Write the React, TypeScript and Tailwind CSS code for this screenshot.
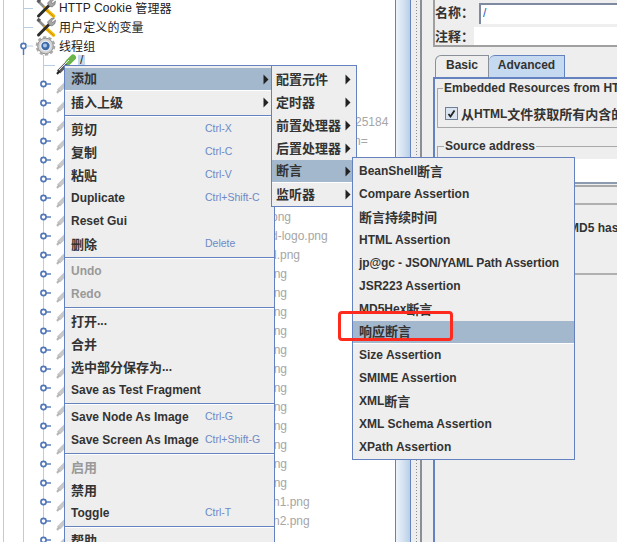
import React from "react";

const FONT = "[font-family:'Liberation_Sans','Noto_Sans_CJK_SC',sans-serif]";

function T({ s, size = "text-[13px]" }: { s: string; size?: string }) {
  const parts = s.split(/([\u3000-\u9fff\uff00-\uffef]+)/);
  return (
    <>
      {parts.map((p, i) =>
        /[\u3000-\u9fff\uff00-\uffef]/.test(p) ? (
          <span key={i} className={`relative top-[1px] ${size}`}>{p}</span>
        ) : (
          <span key={i}>{p}</span>
        )
      )}
    </>
  );
}

function Wrench() {
  return (
    <g>
      <path d="M38 3 L46 11" stroke="#8f8f8f" strokeWidth="2.6" />
      <path d="M37.5 2 L40 4" stroke="#5a5a5a" strokeWidth="3.4" />
      <path d="M45 10.5 L53.5 18" stroke="#f2b705" strokeWidth="3.6" strokeLinecap="round" />
      <path d="M45.5 11 L53.5 18.5" stroke="#b57f00" strokeWidth="0.7" />
      <path d="M38.5 18 L50 6.5" stroke="#2b2b2b" strokeWidth="3" strokeLinecap="round" />
      <path d="M49 8 L47.5 5 L51 1.5 L54.5 1 L51.5 4 L52.5 5.5 L55.5 3 L55 6.5 L52 9 Z" fill="#a5a5a5" stroke="#555" strokeWidth="0.5" />
    </g>
  );
}

function Gear() {
  return (
    <g>
      <circle cx="45.5" cy="10" r="7.8" fill="#d2d2d2" stroke="#8d8d8d" />
      <circle cx="45.5" cy="10" r="8.6" fill="none" stroke="#a8a8a8" strokeWidth="2.4" strokeDasharray="3.2 2.2" />
      <circle cx="45.5" cy="10" r="4.8" fill="#3c69a8" stroke="#eef2f7" strokeWidth="1.2" />
      <circle cx="45" cy="9.4" r="2" fill="#a9c6ea" />
    </g>
  );
}

function Pencil({ active }: { active?: boolean }) {
  return (
    <g>
      <path d="M58.5 17 L69 6.5" stroke={active ? "#5c5c5c" : "#c8c8c8"} strokeWidth="4.4" />
      <path d="M57 19 L59.5 16" stroke={active ? "#222" : "#b5b5b5"} strokeWidth="2" />
      {active && <path d="M68.5 7 L73 2.5" stroke="#6cb44c" strokeWidth="6" strokeLinecap="round" />}
      {active && <path d="M59 15 L69 5" stroke="#e8e8e8" strokeWidth="1" />}
    </g>
  );
}

const GUIDE = "#b7cde4";
const KNOB = "#4f76b8";

function TreeRow({ i, label, faded, x }: { i: number; label?: string; faded?: string; x?: number }) {
  const top = i < 3;
  return (
    <div className="flex h-[19px] shrink-0 items-center whitespace-nowrap text-[12px] text-[#222]">
      <svg width={top ? 59 : 78} height="19" className="shrink-0 overflow-visible">
        <path d="M3.5 0V19" stroke={GUIDE} />
        {i !== 2 && <path d="M23.5 0V19" stroke={GUIDE} />}
        {i >= 3 && <path d="M43.5 0V19" stroke={GUIDE} />}
        {i < 2 && <path d="M23.5 10.5H33" stroke={GUIDE} />}
        {i < 2 && <Wrench />}
        {i === 2 && (
          <>
            <path d="M23.5 0V7" stroke={GUIDE} />
            <path d="M23.5 12V19" stroke={KNOB} strokeWidth="1.4" />
            <circle cx="23.5" cy="10" r="2.6" fill="#fff" stroke={KNOB} strokeWidth="1.6" />
            <path d="M26 10H33" stroke={GUIDE} />
            <Gear />
          </>
        )}
        {i === 3 && <path d="M43.5 10.5H55" stroke={GUIDE} />}
        {i > 3 && (
          <>
            <circle cx="43.5" cy="10" r="2.6" fill="#fff" stroke={KNOB} strokeWidth="1.6" />
            <path d="M46 10H51" stroke={KNOB} strokeWidth="1.4" />
          </>
        )}
        {i >= 3 && <Pencil active={i === 3} />}
      </svg>
      {label && (
        <span className={i === 3 ? "h-[11px] -translate-y-1 bg-[#c5daf0] px-[2px] leading-[11px]" : "tracking-[0.1px]"}>
          <T s={label} size="text-[12px]" />
        </span>
      )}
      {faded && (
        <span className="text-[#a6a6a6]" style={{ paddingLeft: (x ?? 78) - 78 }}>
          {faded}
        </span>
      )}
    </div>
  );
}

const fadedRows: Record<number, [string, number]> = {
  6: ["25184", 355],
  7: ["n=", 354],
  11: ["png", 271],
  12: ["d-logo.png", 271],
  13: ["d.png", 270],
  26: ["n1.png", 273],
  27: ["n2.png", 273],
};
for (let i = 14; i <= 25; i++) fadedRows[i] = ["png", 267];

function Arrow() {
  return (
    <svg width="6" height="11" viewBox="0 0 6 11" className="mt-[2px] shrink-0">
      <path d="M0.5 0.5L5.5 5.5L0.5 10.5Z" fill="#222" />
    </svg>
  );
}

type Item = { t?: string; k?: string; sub?: boolean; on?: boolean; off?: boolean; sep?: boolean; tight?: boolean };

function MenuRow({ it, pad }: { it: Item; pad: string }) {
  if (it.sep) {
    return (
      <div className="h-[4px] shrink-0 pt-[1px]">
        <div className="h-[1px] bg-[#6382bf]" />
        <div className="h-[1px] bg-white" />
      </div>
    );
  }
  return (
    <div
      className={`flex h-[23px] shrink-0 items-center whitespace-nowrap pb-[2px] pr-[5px] text-[12px] font-bold ${pad} ${
        it.on ? "border-b border-white bg-[#a3b8cc]" : ""
      } ${it.off ? "text-[#999999]" : "text-[#333333]"} ${it.tight ? "tracking-[-0.1px]" : ""}`}
    >
      <span className="flex-1">
        <T s={it.t ?? ""} />
      </span>
      {it.k && <span className="absolute left-[140px] text-[10.5px] font-normal text-[#6d8ac6]">{it.k}</span>}
      {it.sub && <Arrow />}
    </div>
  );
}

const mainItems: Item[] = [
  { t: "添加", sub: true, on: true },
  { t: "插入上级", sub: true },
  { sep: true },
  { t: "剪切", k: "Ctrl-X" },
  { t: "复制", k: "Ctrl-C" },
  { t: "粘贴", k: "Ctrl-V" },
  { t: "Duplicate", k: "Ctrl+Shift-C" },
  { t: "Reset Gui" },
  { t: "删除", k: "Delete" },
  { sep: true },
  { t: "Undo", off: true },
  { t: "Redo", off: true },
  { sep: true },
  { t: "打开..." },
  { t: "合并" },
  { t: "选中部分保存为..." },
  { t: "Save as Test Fragment" },
  { sep: true },
  { t: "Save Node As Image", k: "Ctrl-G" },
  { t: "Save Screen As Image", k: "Ctrl+Shift-G" },
  { sep: true },
  { t: "启用", off: true },
  { t: "禁用" },
  { t: "Toggle", k: "Ctrl-T" },
  { sep: true },
  { t: "帮助" },
];

const subItems: Item[] = [
  { t: "配置元件", sub: true },
  { t: "定时器", sub: true },
  { t: "前置处理器", sub: true },
  { t: "后置处理器", sub: true },
  { t: "断言", sub: true, on: true },
  { t: "监听器", sub: true },
];

const assertItems: Item[] = [
  { t: "BeanShell断言" },
  { t: "Compare Assertion" },
  { t: "断言持续时间" },
  { t: "HTML Assertion" },
  { t: "jp@gc - JSON/YAML Path Assertion", tight: true },
  { t: "JSR223 Assertion" },
  { t: "MD5Hex断言" },
  { t: "响应断言", on: true },
  { t: "Size Assertion" },
  { t: "SMIME Assertion" },
  { t: "XML断言" },
  { t: "XML Schema Assertion" },
  { t: "XPath Assertion" },
];

export default function App() {
  return (
    <div className={`relative flex h-[542px] w-[617px] overflow-hidden bg-white ${FONT}`}>
      {/* tree */}
      <div className="-mt-[2px] flex w-[395px] shrink-0 flex-col overflow-hidden">
        <TreeRow i={0} label="HTTP Cookie 管理器" />
        <TreeRow i={1} label="用户定义的变量" />
        <TreeRow i={2} label="线程组" />
        <TreeRow i={3} label="/" />
        {Array.from({ length: 25 }, (_, k) => k + 4).map((i) => (
          <TreeRow key={i} i={i} faded={fadedRows[i]?.[0]} x={fadedRows[i]?.[1]} />
        ))}
      </div>

      {/* scrollbar */}
      <div className="w-[16px] shrink-0 border-x border-[#6382bf] bg-gradient-to-r from-[#eef3fa] via-[#d5e3f2] to-[#b9cfe6]" />

      {/* divider */}
      <div className="flex w-[11px] shrink-0 justify-center border-r-2 border-[#8a8f96] bg-[#eeeeee] pl-[2px]">
        <div className="h-full w-[3px] bg-[radial-gradient(circle,#8d8d8d_0.7px,transparent_0.8px)] bg-[length:3px_3px]" />
      </div>

      {/* right */}
      <div className="flex min-w-0 flex-1 flex-col bg-[#eeeeee] pl-[11px]">
        <div className="h-[47px] w-[300px] shrink-0 border-b-2 border-l-2 border-[#a0a0a0] text-[13px] font-bold text-[#333]">
          <div className="flex h-[25px] items-center">
            <span className="w-[44px] pt-[1px]">名称：</span>
            <div className="mt-[2px] h-[21px] flex-1 border-l-2 border-t-2 border-[#7d8aa0] bg-white pl-[2px] text-[12px] font-normal leading-[17px] text-[#2a5db0]">
              /
            </div>
          </div>
          <div className="flex h-[20px] items-center">
            <span className="w-[39px] pt-[3px]">注释：</span>
            <div className="mt-[2px] h-[18px] flex-1 bg-white" />
          </div>
        </div>

        {/* tabs */}
        <div className="mt-[8px] flex h-[22px] shrink-0 pl-[2px] text-[12px] font-bold text-[#333]">
          <div className="flex w-[54px] items-center justify-center rounded-tl-[6px] border-x border-t border-[#8a9099] pb-[3px]">Basic</div>
          <div className="flex w-[76px] items-center justify-center rounded-tl-[6px] border-r border-t border-[#6382bf] bg-[#c5daf0] pb-[3px]">
            Advanced
          </div>
        </div>

        {/* tab body */}
        <div className="flex w-[300px] flex-1 flex-col border-l-2 border-t-2 border-[#6382bf] pl-[2px] text-[12px] font-bold text-[#333]">
          <fieldset className="h-[49px] shrink-0 border border-[#a8a8a8] pl-[5px]">
            <legend className="whitespace-nowrap px-[1px]">Embedded Resources from HTML Files</legend>
            <div className="ml-[2px] mt-[7px] flex items-center gap-[3px] whitespace-nowrap">
              <span className="flex h-[13px] w-[13px] items-center justify-center border border-[#6f7f95] bg-[#d9e4f0]">
                <svg width="9" height="9" viewBox="0 0 9 9">
                  <path d="M1.5 5L3.5 7.5L7.5 1.5" fill="none" stroke="#222" strokeWidth="1.8" />
                </svg>
              </span>
              <span><T s="从HTML文件获取所有内含的资源" /></span>
            </div>
          </fieldset>
          <fieldset className="mt-[9px] h-[50px] shrink-0 border border-b-2 border-[#a8a8a8] pl-[6px]">
            <legend className="whitespace-nowrap px-[1px]">Source address</legend>
            <div className="ml-[-6px] mt-[4px] h-[25px] border-b-2 border-[#8c9bb0] bg-white" />
          </fieldset>
          <div className="mt-[16px] h-[70px] shrink-0 border-t-2 border-[#b0b0b0] pl-[132px] pt-[14px]">
            <span className="whitespace-nowrap">MD5 hash</span>
          </div>
          <div className="h-[2px] shrink-0 bg-[#b0b0b0]" />
        </div>
      </div>

      {/* popup menus */}
      <div className="absolute left-[64px] top-[65px] flex h-[500px] w-[211px] flex-col border border-[#6382bf] bg-[#eeeeee] pt-[2px]">
        {mainItems.map((it, i) => (
          <MenuRow key={i} it={it} pad="pl-[6px]" />
        ))}
      </div>
      <div className="absolute left-[271px] top-[65px] flex w-[86px] flex-col border border-[#6382bf] bg-[#eeeeee] pt-[2px]">
        {subItems.map((it, i) => (
          <MenuRow key={i} it={it} pad="pl-[4px]" />
        ))}
      </div>
      <div className="absolute left-[352px] top-[157px] flex w-[223px] flex-col border border-[#6382bf] bg-[#eeeeee] pt-[2px]">
        {assertItems.map((it, i) => (
          <MenuRow key={i} it={it} pad="pl-[6px]" />
        ))}
      </div>

      {/* red annotation */}
      <div className="absolute left-[338px] top-[311px] h-[30px] w-[115px] rounded-[4px] border-[3px] border-[#ff2a1e]" />
    </div>
  );
}
